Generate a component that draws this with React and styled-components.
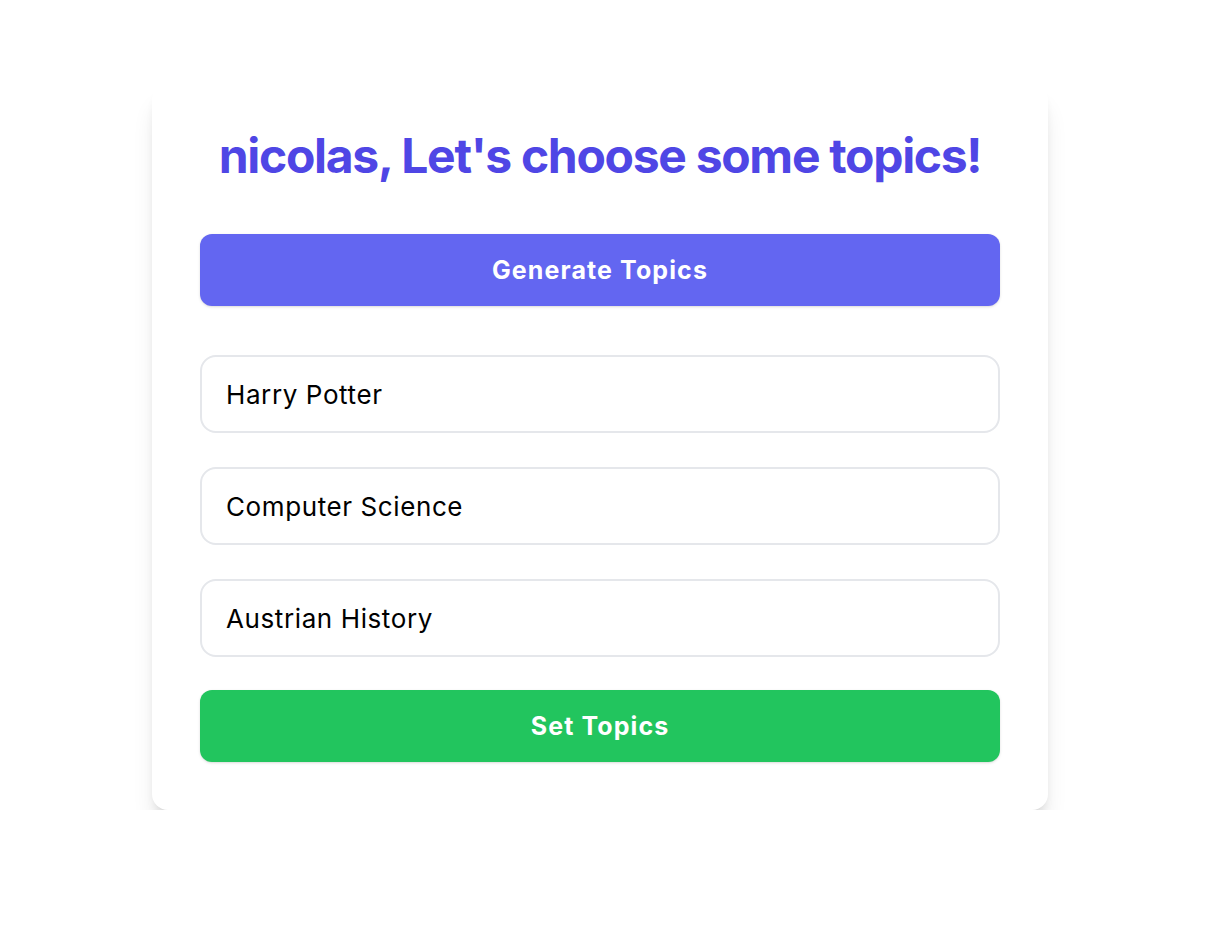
import React, { useState } from 'react'
import styled, { createGlobalStyle } from 'styled-components'

const GlobalStyle = createGlobalStyle`
  * { box-sizing: border-box; }
  body {
    margin: 0;
    background: #fff;
    font-family: Inter, "Noto Sans", "Liberation Sans", sans-serif;
  }
`

const Page = styled.main`
  width: 1200px;
  display: flex;
  justify-content: center;
  padding-top: 84px;
`

const Card = styled.section`
  width: 896px;
  padding: 48px;
  background: #fff;
  border-radius: 16px;
  box-shadow: 0 20px 25px -5px rgba(0, 0, 0, 0.12), 0 8px 12px -6px rgba(0, 0, 0, 0.14);
  display: flex;
  flex-direction: column;
`

const Title = styled.h1`
  margin: 0 0 54px;
  font-size: 48px;
  line-height: 48px;
  font-weight: 700;
  letter-spacing: -1.3px;
  color: #4f46e5;
  text-align: center;
`

const ActionButton = styled.button`
  width: 100%;
  height: 72px;
  border: none;
  border-radius: 12px;
  background: ${p => p.$color};
  color: #fff;
  font-family: inherit;
  font-size: 25px;
  font-weight: 700;
  letter-spacing: 1.1px;
  box-shadow: 0 1px 3px rgba(0, 0, 0, 0.12), 0 1px 2px -1px rgba(0, 0, 0, 0.1);
  cursor: pointer;
`

const TopicList = styled.div`
  display: flex;
  flex-direction: column;
  gap: 34px;
  margin: 49px 0 33px;
`

const TopicInput = styled.input`
  width: 100%;
  height: 78px;
  padding: 0 24px;
  border: 2px solid #e5e7eb;
  border-radius: 16px;
  font-family: inherit;
  font-size: 26px;
  letter-spacing: 0.6px;
  color: #000;
  background: #fff;
  outline: none;
`

export default function App() {
  const [topics, setTopics] = useState(['Harry Potter', 'Computer Science', 'Austrian History'])

  return (
    <>
      <GlobalStyle />
      <Page>
        <Card>
          <Title>nicolas, Let's choose some topics!</Title>
          <ActionButton $color="#6366f1">Generate Topics</ActionButton>
          <TopicList>
            {topics.map((t, i) => (
              <TopicInput
                key={i}
                value={t}
                onChange={e => setTopics(topics.map((x, j) => (j === i ? e.target.value : x)))}
              />
            ))}
          </TopicList>
          <ActionButton $color="#22c55e">Set Topics</ActionButton>
        </Card>
      </Page>
    </>
  )
}
